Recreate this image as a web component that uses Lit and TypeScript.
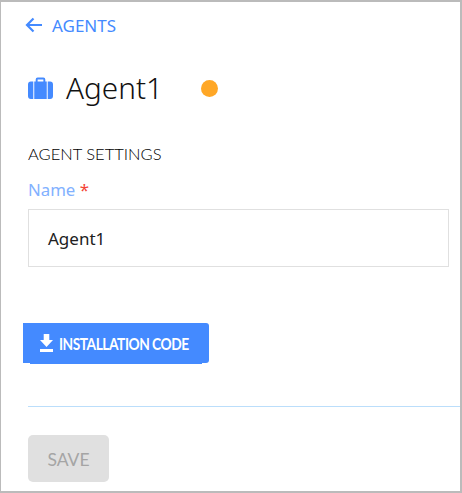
import { LitElement, html, css } from "lit";
import { customElement } from "lit/decorators.js";

@customElement("app-root")
export class AppRoot extends LitElement {
  static styles = css`
    :host {
      display: block;
      width: 462px;
      height: 493px;
      box-sizing: border-box;
      overflow: hidden;
      background: #fff;
      border-style: solid;
      border-color: #bbbbbb;
      border-width: 2px 2px 2px 1px;
      font-family: "Noto Sans", "Open Sans", sans-serif;
    }
    .page {
      display: flex;
      flex-direction: column;
      align-items: flex-start;
      padding: 0 0 0 27px;
    }
    .back {
      display: flex;
      align-items: center;
      gap: 10px;
      height: 20px;
      margin: 13px 0 0 -3px;
      color: #448aff;
      font-size: 17px;
    }
    .title {
      display: flex;
      align-items: center;
      height: 36px;
      margin-top: 35px;
    }
    .title h1 {
      margin: 0 0 0 13px;
      font-size: 29.7px;
      font-weight: 300;
      color: #111;
      line-height: 36px;
    }
    .dot {
      width: 17px;
      height: 17px;
      border-radius: 50%;
      background: #ffa726;
      margin-left: 38px;
    }
    .section {
      margin-top: 38px;
      height: 20px;
      line-height: 20px;
      font-size: 16.5px;
      font-weight: 300;
      font-family: "Lato", sans-serif;
      color: #000;
    }
    .label {
      margin-top: 16px;
      height: 20px;
      line-height: 20px;
      font-size: 16.8px;
      color: #82b1ff;
    }
    .label span {
      color: #f44336;
    }
    .input {
      box-sizing: border-box;
      width: 421px;
      height: 58px;
      margin-top: 9px;
      padding-left: 19px;
      display: flex;
      align-items: center;
      border: 1px solid #e0e0e0;
      font-size: 17px;
      color: #212121;
    }
    .install {
      position: relative;
      display: flex;
      align-items: center;
      gap: 6px;
      box-sizing: border-box;
      width: 186px;
      height: 40px;
      margin: 56px 0 0 -5px;
      padding-left: 17px;
      background: #448aff;
      border-radius: 0 3px 3px 0;
      color: #fff;
      font-family: "Lato", sans-serif;
      font-size: 17px;
      font-weight: 700;
      letter-spacing: -0.6px;
    }
    .install::after {
      content: "";
      position: absolute;
      left: 7px;
      right: 7px;
      bottom: -1px;
      height: 1px;
      background: #448aff;
    }
    .install span {
      display: inline-block;
      white-space: nowrap;
      transform: scaleX(0.81);
      transform-origin: left center;
    }
    .rule {
      align-self: stretch;
      height: 1px;
      margin-top: 43px;
      background: #bbdefb;
    }
    .save {
      box-sizing: border-box;
      width: 81px;
      height: 47px;
      margin-top: 28px;
      padding-top: 2px;
      display: flex;
      align-items: center;
      justify-content: center;
      background: #e0e0e0;
      border-radius: 5px;
      color: #a5a5a5;
      font-family: "Lato", sans-serif;
      font-size: 17.5px;
    }
    svg {
      display: block;
      flex: none;
    }
  `;

  render() {
    return html`
      <div class="page">
        <div class="back">
          <svg width="17" height="16" viewBox="0 0 17 16" fill="none" stroke="#448aff" stroke-width="2.2">
            <path d="M17 8H2M8.500 1.500L2 8l6.500 6.500" />
          </svg>
          AGENTS
        </div>
        <div class="title">
          <svg width="25" height="23" viewBox="0 0 26 23" preserveAspectRatio="none" fill="#448aff">
            <path d="M8 5V2.500A2 2 0 0 1 10 .5h6a2 2 0 0 1 2 2V5h-2V2.500h-6V5z" />
            <path d="M6.500 4.500h13V22h-13z" />
            <path d="M5.500 4.500V22H3a3 3 0 0 1-3-3V7.500a3 3 0 0 1 3-3zM20.500 4.500V22H23a3 3 0 0 0 3-3V7.500a3 3 0 0 0-3-3z" />
          </svg>
          <h1>Agent1</h1>
          <div class="dot"></div>
        </div>
        <div class="section">AGENT SETTINGS</div>
        <div class="label">Name <span>*</span></div>
        <div class="input">Agent1</div>
        <div class="install">
          <svg width="13" height="18" viewBox="0 0 14 18" preserveAspectRatio="none" fill="#fff">
            <path d="M4 0h6v6h4L7 13 0 6h4zM0 15h14v3H0z" />
          </svg>
          <span>INSTALLATION CODE</span>
        </div>
        <div class="rule"></div>
        <div class="save">SAVE</div>
      </div>
    `;
  }
}
